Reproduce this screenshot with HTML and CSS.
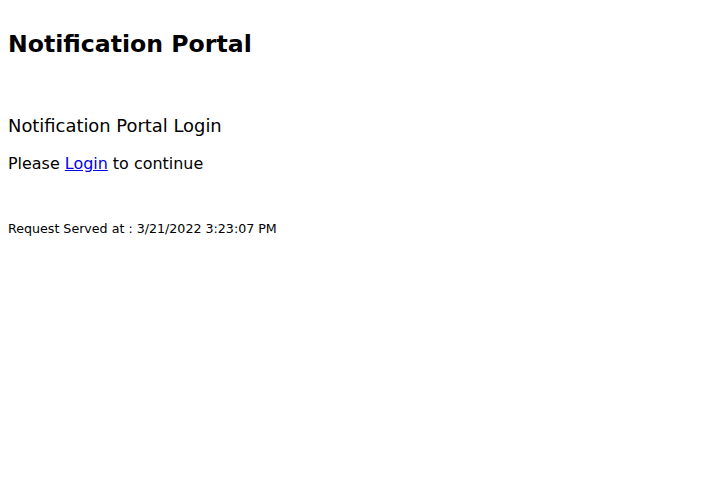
FILE: index.html
```html
<!DOCTYPE html>
<html>
<head>
<meta charset="utf-8">
<title>Notification Portal</title>
<link rel="stylesheet" href="styles.css">
</head>
<body>
<header class="site-header">
  <h1 class="site-title">Notification Portal</h1>
</header>
<main class="content">
  <h2 class="page-title">Notification Portal Login</h2>
  <p class="intro">Please <a href="#" class="login-link">Login</a> to continue</p>
</main>
<footer class="footer">
  <p class="served">Request Served at : 3/21/2022 3:23:07 PM</p>
</footer>
</body>
</html>
```

FILE: styles.css
```css
body {
  margin: 8px;
  font-family: "DejaVu Sans", sans-serif;
  color: #000;
  background: #fff;
}
.site-header {
  padding-top: 2px;
}
.site-title {
  font-size: 23.6px;
  font-weight: bold;
  margin: 20px 0;
}
.content {
  padding-top: 19px;
}
.page-title {
  font-size: 17.9px;
  font-weight: normal;
  margin: 18px 0;
}
.intro {
  font-size: 15.95px;
  margin: 16px 0;
}
.login-link {
  color: #0000ee;
}
.footer {
  padding-top: 19px;
}
.served {
  font-size: 12.65px;
  margin: 13px 0;
}
```
